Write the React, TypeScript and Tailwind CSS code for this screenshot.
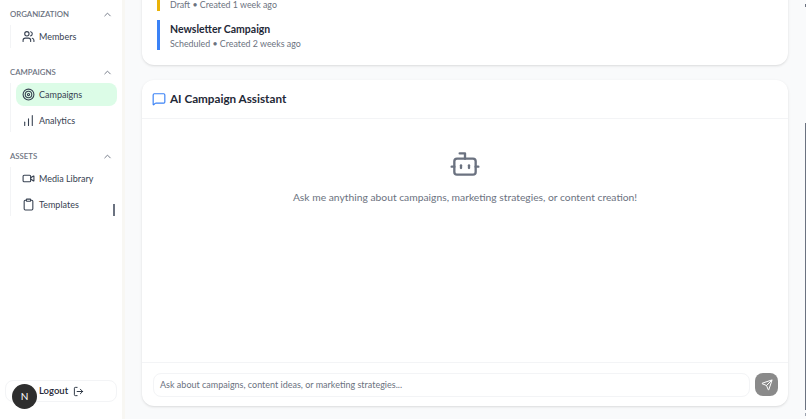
import React from 'react';
import { Bot, ChartNoAxesColumnIncreasing, ChevronUp, Clipboard, LogOut, MessageSquare, Send, Target, Users, Video } from 'lucide-react';

const sections = [
  {
    title: 'ORGANIZATION',
    items: [{ name: 'Members', icon: Users, active: false }],
  },
  {
    title: 'CAMPAIGNS',
    items: [
      { name: 'Campaigns', icon: Target, active: true },
      { name: 'Analytics', icon: ChartNoAxesColumnIncreasing, active: false },
    ],
  },
  {
    title: 'ASSETS',
    items: [
      { name: 'Media Library', icon: Video, active: false },
      { name: 'Templates', icon: Clipboard, active: false },
    ],
  },
];

function Sidebar() {
  return (
    <aside className="relative flex h-full w-[125px] shrink-0 flex-col justify-between border-r-[3px] border-[#f8f7f3] bg-white">
      <nav className="flex flex-col gap-[18px] pt-2">
        {sections.map((section) => (
          <div key={section.title}>
            <div className="flex h-[13px] items-center justify-between pl-[10px] pr-[9px]">
              <span className="text-[7.8px] font-semibold text-[#6b7280]">{section.title}</span>
              <ChevronUp className="h-[11px] w-[11px] text-[#6b7280]" />
            </div>
            <div className="mt-[4px] ml-[10px] flex flex-col gap-[3px] border-l border-[#f3f4f6] pl-[5px]">
              {section.items.map((item) => (
                <div
                  key={item.name}
                  className={`flex h-[23px] w-[101px] items-center gap-[4px] rounded-lg pl-[6px] text-[9px] text-[#374151] ${
                    item.active ? 'bg-[#dcfce7]' : ''
                  }`}
                >
                  <item.icon className="h-[13px] w-[13px] text-[#374151]" />
                  <span>{item.name}</span>
                </div>
              ))}
            </div>
          </div>
        ))}
      </nav>
      <div className="absolute left-[113px] top-[204px] h-[12px] w-[2px] bg-[#6b7280]" />
      <div className="relative mb-[17px] ml-[5px] flex h-[22px] w-[112px] items-center rounded-lg border border-[#f3f4f6] pl-[33px]">
        <span className="text-[9.5px] font-semibold text-[#1f2937]">Logout</span>
        <LogOut className="ml-[5px] h-[11px] w-[11px] text-[#1f2937]" />
        <div className="absolute left-[6px] top-[3px] flex h-[25px] w-[25px] items-center justify-center rounded-full bg-[#2e2e2e] text-[10px] text-white">
          N
        </div>
      </div>
    </aside>
  );
}

function CampaignRow({ color, name, meta }: { color: string; name: string; meta: string }) {
  return (
    <div className={`border-l-[3px] pl-[10px] ${color}`}>
      {name && <p className="pt-[1px] text-[10.5px] leading-[16px] font-bold text-[#1f2937]">{name}</p>}
      <p className="text-[8.85px] leading-[13px] text-[#6b7280]">{meta}</p>
    </div>
  );
}

export default function App() {
  return (
    <div className="flex h-[419px] w-[806px] overflow-hidden bg-[#f9fafb] font-['Lato','Noto_Sans',sans-serif]">
      <Sidebar />
      <main className="relative flex min-w-0 flex-1 flex-col">
        <section className="mt-[-40px] ml-[17px] mr-[18px] flex h-[105px] flex-col justify-end gap-[9px] rounded-xl bg-white pb-[15px] pl-[15px] shadow-sm">
          <CampaignRow color="border-[#eab308]" name="" meta="Draft • Created 1 week ago" />
          <CampaignRow color="border-[#3b82f6]" name="Newsletter Campaign" meta="Scheduled • Created 2 weeks ago" />
        </section>
        <section className="mt-[15px] ml-[17px] mr-[18px] flex h-[326px] flex-col rounded-xl bg-white shadow-sm">
          <header className="flex h-[39px] items-center gap-[4px] border-b border-[#f3f4f6] pl-[10px]">
            <MessageSquare className="h-[14px] w-[14px] text-[#3b82f6]" />
            <h2 className="text-[11.7px] font-bold text-[#1f2937]">AI Campaign Assistant</h2>
          </header>
          <div className="flex flex-1 flex-col items-center pt-[29px]">
            <Bot className="h-[32px] w-[32px] text-[#6b7280]" strokeWidth={1.75} />
            <p className="mt-[10px] text-[10.3px] text-[#6b7280]">
              Ask me anything about campaigns, marketing strategies, or content creation!
            </p>
          </div>
          <footer className="flex h-[44px] items-center gap-[5px] border-t border-[#f3f4f6] pl-[11px]">
            <div className="flex h-[24px] w-[597px] items-center rounded-lg border border-[#f3f4f6] pl-[6px] text-[9px] text-[#6b7280]">
              Ask about campaigns, content ideas, or marketing strategies...
            </div>
            <div className="flex h-[23px] w-[23px] items-center justify-center rounded-lg bg-[#8a8a8a]">
              <Send className="h-[12px] w-[12px] text-white" />
            </div>
          </footer>
        </section>
        <div className="absolute right-0 top-[123px] h-[287px] w-[1px] bg-[#6b7280]" />
        <div className="absolute right-0 top-[4px] h-[3px] w-[1px] bg-[#6b7280]" />
        <div className="absolute right-0 top-[413px] h-[3px] w-[1px] bg-[#9ca3af]" />
      </main>
    </div>
  );
}
